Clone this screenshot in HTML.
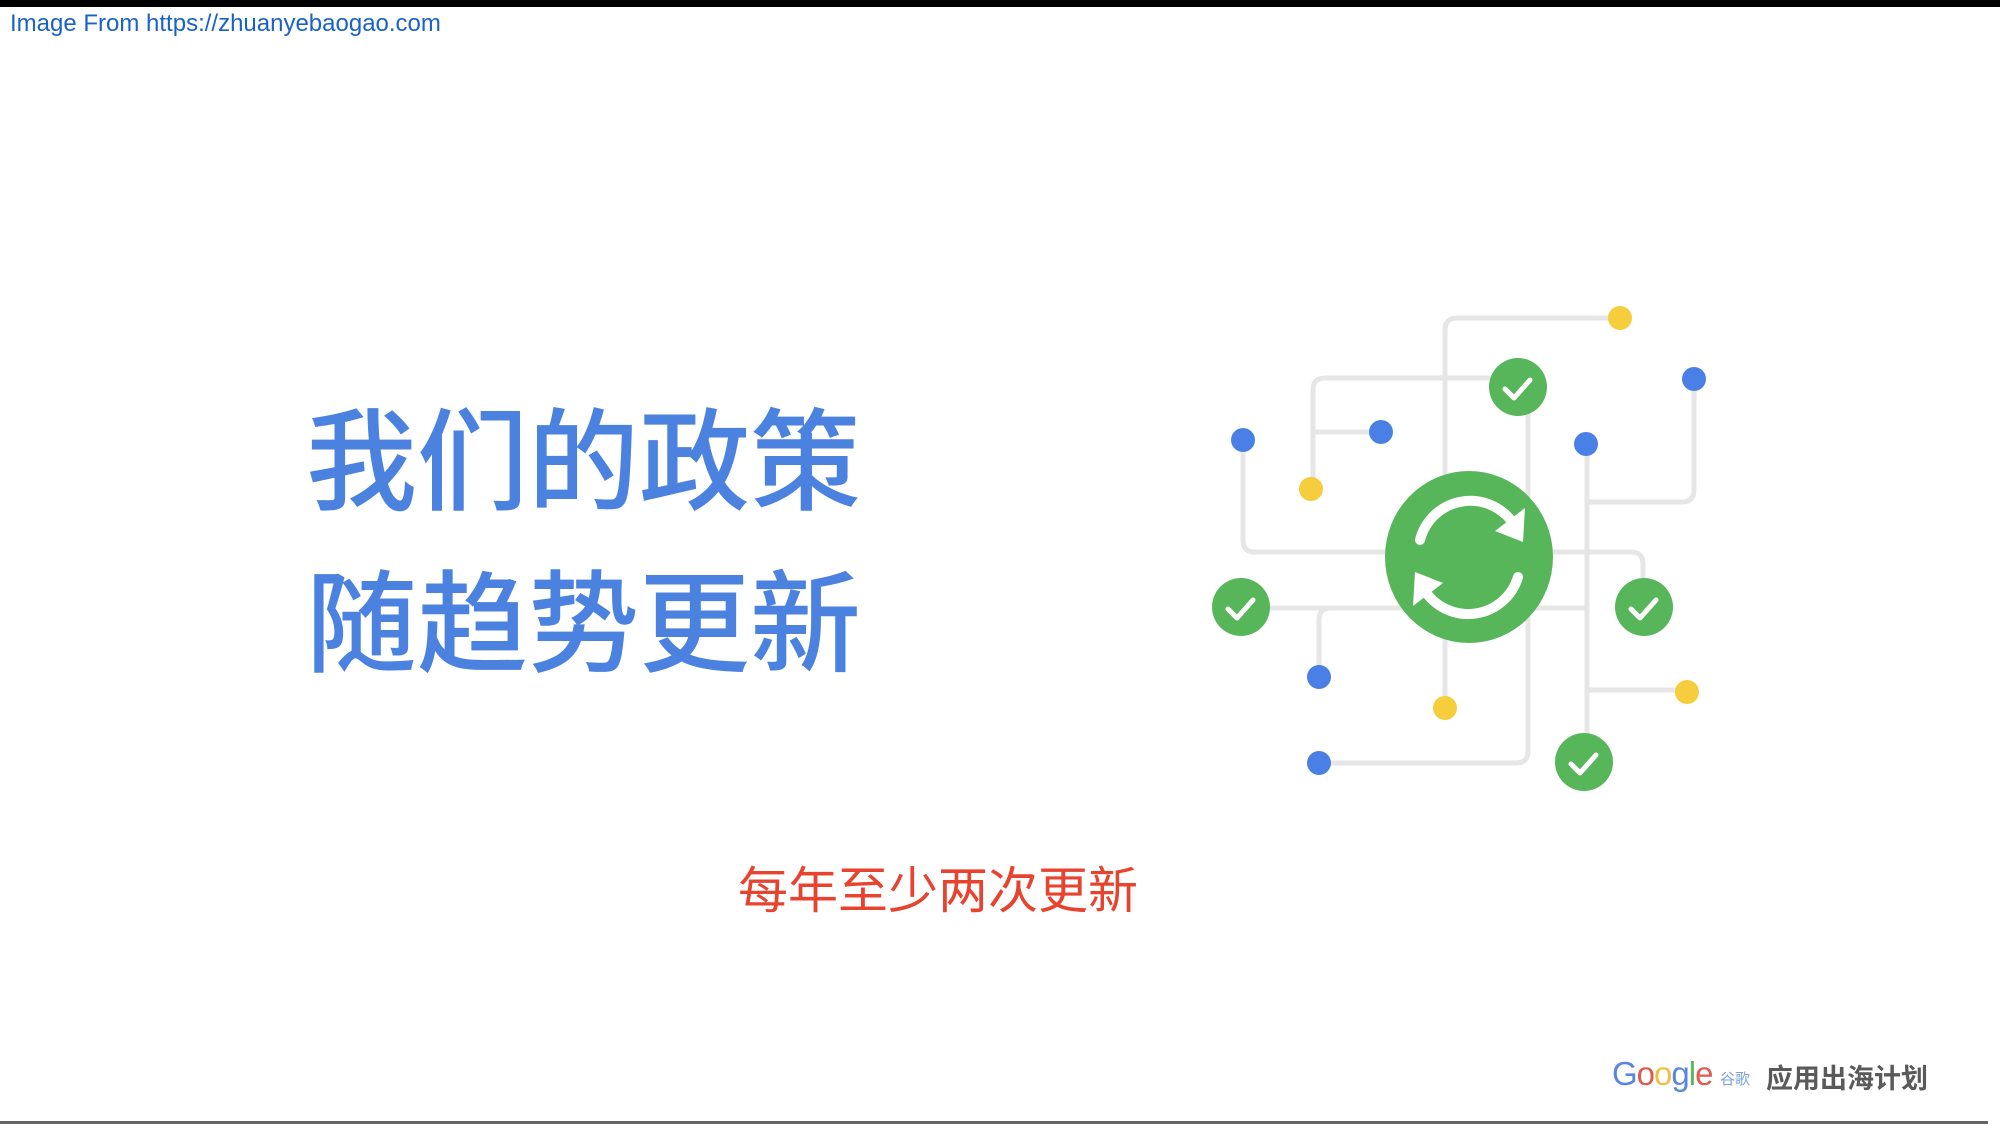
<!DOCTYPE html>
<html><head><meta charset="utf-8"><style>
html,body{margin:0;padding:0;background:#fff;width:2000px;height:1125px;overflow:hidden;position:relative}
.top{position:absolute;left:0;top:0;width:2000px;height:7px;background:#000}
.src{position:absolute;left:10px;top:10px;font:24px "Liberation Sans",sans-serif;color:#1a62c9;white-space:nowrap}
.h{position:absolute;left:306px;font:500 111px "Liberation Sans","Noto Sans CJK SC",sans-serif;color:#4b82e0;white-space:nowrap;line-height:1}
.sub{position:absolute;left:738px;top:866px;font:50px "Liberation Sans","Noto Sans CJK SC",sans-serif;color:#e8432f;white-space:nowrap;line-height:1}
.g{position:absolute;left:1612px;top:1055px;font:33px "Liberation Sans",sans-serif;letter-spacing:-1px;white-space:nowrap}
.gs{position:absolute;left:1720px;top:1068px;font:15px "Noto Sans CJK SC",sans-serif;color:#7fa3e0}
.plan{position:absolute;left:1766px;top:1057px;font:bold 27px "Liberation Sans","Noto Sans CJK SC",sans-serif;color:#5a5a5a;white-space:nowrap}
.bl{position:absolute;left:0;top:1121px;width:1988px;height:3px;background:#666}
</style></head><body>
<div class="top"></div>
<div class="src">Image From https://zhuanyebaogao.com</div>
<div class="h" style="top:408px">我们的政策</div>
<div class="h" style="top:570px">随趋势更新</div>
<div class="sub">每年至少两次更新</div>
<svg width="2000" height="1125" style="position:absolute;left:0;top:0">
<g fill="none" stroke="#e6e6e6" stroke-width="5" stroke-linejoin="round">
<path d="M1445 557 V330 Q1445 318 1457 318 H1620"/>
<path d="M1518 378 H1325 Q1313 378 1313 390 V489"/>
<path d="M1313 432 H1381"/>
<path d="M1243 440 V540 Q1243 552 1255 552 H1469"/>
<path d="M1241 608 H1469"/>
<path d="M1319 677 V620 Q1319 608 1331 608"/>
<path d="M1528 387 V751 Q1528 763 1516 763 H1319"/>
<path d="M1587 444 V762"/>
<path d="M1587 502 H1682 Q1694 502 1694 490 V379"/>
<path d="M1587 690 H1687"/>
<path d="M1469 552 H1631 Q1643 552 1643 564 V607"/>
<path d="M1469 608 H1587"/>
<path d="M1445 557 V708"/>
</g>
<g fill="#4a7fe6">
<circle cx="1694" cy="379" r="12"/><circle cx="1243" cy="440" r="12"/><circle cx="1381" cy="432" r="12"/>
<circle cx="1586" cy="444" r="12"/><circle cx="1319" cy="677" r="12"/><circle cx="1319" cy="763" r="12"/>
</g>
<g fill="#f5cd3d">
<circle cx="1620" cy="318" r="12"/><circle cx="1311" cy="489" r="12"/><circle cx="1445" cy="708" r="12"/><circle cx="1687" cy="692" r="12"/>
</g>
<g fill="#58b65a">
<ellipse cx="1469" cy="557" rx="84" ry="86"/>
<circle cx="1518" cy="387" r="29"/><circle cx="1241" cy="607" r="29"/><circle cx="1644" cy="607" r="29"/><circle cx="1584" cy="762" r="29"/>
</g>
<g fill="none" stroke="#fff" stroke-width="5" stroke-linecap="round" stroke-linejoin="round">
<path d="M1505 389 l9 9 l16 -18"/><path d="M1228 609 l9 9 l16 -18"/><path d="M1631 609 l9 9 l16 -18"/><path d="M1571 764 l9 9 l16 -18"/>
</g>
<g transform="translate(-5 0)">
<g fill="none" stroke="#fff" stroke-width="10" stroke-linecap="round">
<path d="M1425 540 A52 52 0 0 1 1518 523"/>
<path d="M1523 577 A52 52 0 0 1 1430 591"/>
</g>
<g fill="#fff">
<path d="M1528 542 L1500 531 L1530 508 Z"/>
<path d="M1420 572 L1448 583 L1418 606 Z"/>
</g>
</g>
</svg>
<div class="g"><span style="color:#5a86e0">G</span><span style="color:#e05a4e">o</span><span style="color:#f0c040">o</span><span style="color:#5a86e0">g</span><span style="color:#5cb85c">l</span><span style="color:#e05a4e">e</span></div>
<div class="gs">谷歌</div>
<div class="plan">应用出海计划</div>
<div class="bl"></div>
</body></html>
